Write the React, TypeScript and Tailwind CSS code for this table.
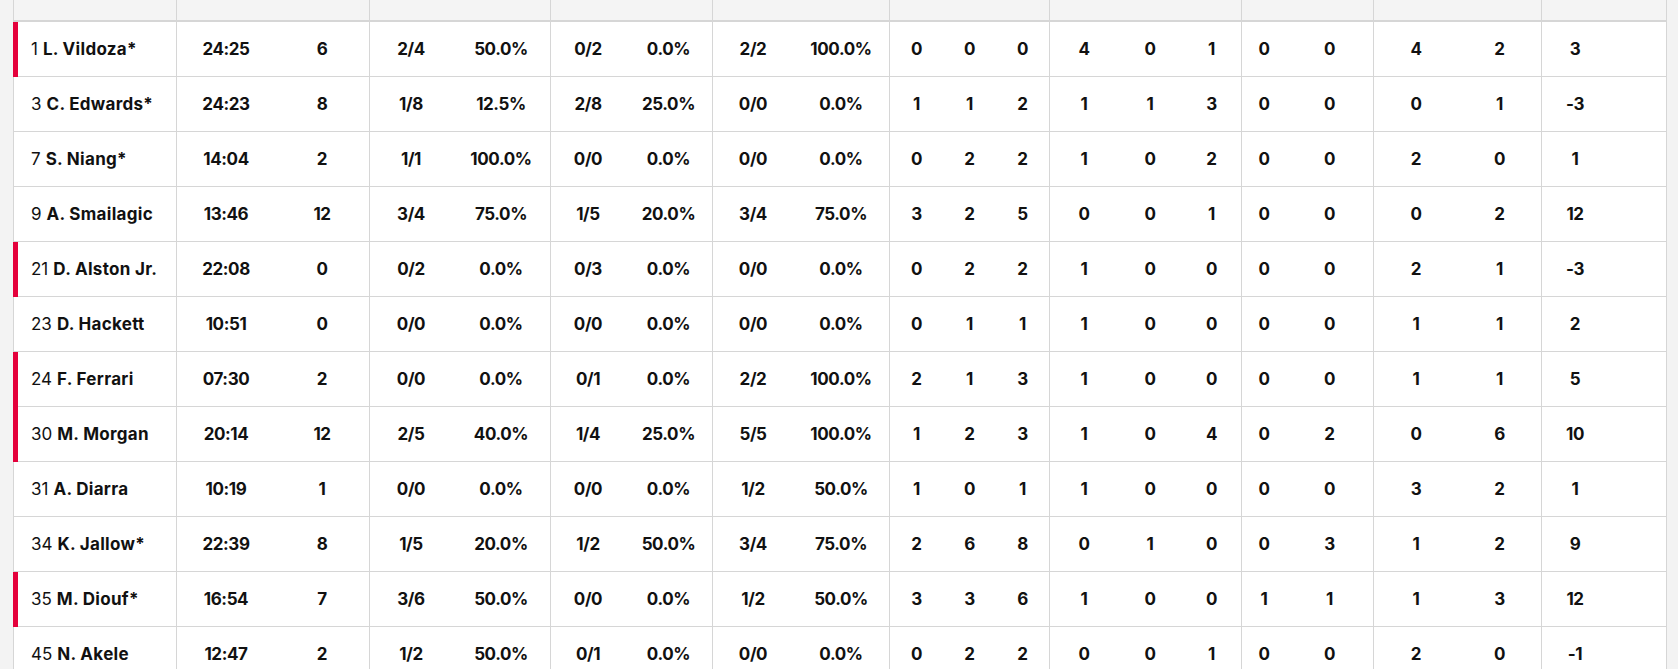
type Row = {
	num: string;
	name: string;
	flag?: boolean;
	stats: string[];
};

// widths per data column (incl. right border on group ends)
const cols = [
	{ w: "w-[98px]" },
	{ w: "w-[95px]", end: true },
	{ w: "w-[82px]" },
	{ w: "w-[99px]", end: true },
	{ w: "w-[74px]" },
	{ w: "w-[88px]", end: true },
	{ w: "w-[80px]" },
	{ w: "w-[97px]", end: true },
	{ w: "w-[53px]" },
	{ w: "w-[53px]" },
	{ w: "w-[54px]", end: true },
	{ w: "w-[68px]" },
	{ w: "w-[64px]" },
	{ w: "w-[60px]", end: true },
	{ w: "w-[44px]" },
	{ w: "w-[88px]", end: true },
	{ w: "w-[84px]" },
	{ w: "w-[84px]", end: true },
	{ w: "w-[66px]" },
	{ w: "w-[59px]", end: true },
];

const rows: Row[] = [
	{ num: "1", name: "L. Vildoza*", flag: true, stats: ["24:25", "6", "2/4", "50.0%", "0/2", "0.0%", "2/2", "100.0%", "0", "0", "0", "4", "0", "1", "0", "0", "4", "2", "3", ""] },
	{ num: "3", name: "C. Edwards*", stats: ["24:23", "8", "1/8", "12.5%", "2/8", "25.0%", "0/0", "0.0%", "1", "1", "2", "1", "1", "3", "0", "0", "0", "1", "-3", ""] },
	{ num: "7", name: "S. Niang*", stats: ["14:04", "2", "1/1", "100.0%", "0/0", "0.0%", "0/0", "0.0%", "0", "2", "2", "1", "0", "2", "0", "0", "2", "0", "1", ""] },
	{ num: "9", name: "A. Smailagic", stats: ["13:46", "12", "3/4", "75.0%", "1/5", "20.0%", "3/4", "75.0%", "3", "2", "5", "0", "0", "1", "0", "0", "0", "2", "12", ""] },
	{ num: "21", name: "D. Alston Jr.", flag: true, stats: ["22:08", "0", "0/2", "0.0%", "0/3", "0.0%", "0/0", "0.0%", "0", "2", "2", "1", "0", "0", "0", "0", "2", "1", "-3", ""] },
	{ num: "23", name: "D. Hackett", stats: ["10:51", "0", "0/0", "0.0%", "0/0", "0.0%", "0/0", "0.0%", "0", "1", "1", "1", "0", "0", "0", "0", "1", "1", "2", ""] },
	{ num: "24", name: "F. Ferrari", flag: true, stats: ["07:30", "2", "0/0", "0.0%", "0/1", "0.0%", "2/2", "100.0%", "2", "1", "3", "1", "0", "0", "0", "0", "1", "1", "5", ""] },
	{ num: "30", name: "M. Morgan", flag: true, stats: ["20:14", "12", "2/5", "40.0%", "1/4", "25.0%", "5/5", "100.0%", "1", "2", "3", "1", "0", "4", "0", "2", "0", "6", "10", ""] },
	{ num: "31", name: "A. Diarra", stats: ["10:19", "1", "0/0", "0.0%", "0/0", "0.0%", "1/2", "50.0%", "1", "0", "1", "1", "0", "0", "0", "0", "3", "2", "1", ""] },
	{ num: "34", name: "K. Jallow*", stats: ["22:39", "8", "1/5", "20.0%", "1/2", "50.0%", "3/4", "75.0%", "2", "6", "8", "0", "1", "0", "0", "3", "1", "2", "9", ""] },
	{ num: "35", name: "M. Diouf*", flag: true, stats: ["16:54", "7", "3/6", "50.0%", "0/0", "0.0%", "1/2", "50.0%", "3", "3", "6", "1", "0", "0", "1", "1", "1", "3", "12", ""] },
	{ num: "45", name: "N. Akele", stats: ["12:47", "2", "1/2", "50.0%", "0/1", "0.0%", "0/0", "0.0%", "0", "2", "2", "0", "0", "1", "0", "0", "2", "0", "-1", ""] },
];

function StatRow({ row }: { row: Row }) {
	return (
		<div className="flex h-[55px]">
			{row.flag ? (
				<div className="w-[5px] shrink-0 bg-[#e4003b]"></div>
			) : (
				<div className="w-[5px] shrink-0 border-l border-b border-[#d6d6d6]"></div>
			)}
			<div className="flex w-[159px] shrink-0 items-center border-b border-r border-[#d6d6d6] pl-[13px] pt-[2px] whitespace-nowrap">
				<span className="font-normal">{row.num}</span>
				<span className="ml-[5px] font-bold tracking-[0.3px]">{row.name}</span>
			</div>
			{row.stats.map((s, i) => (
				<div
					key={i}
					className={`flex shrink-0 items-center justify-center border-b border-[#d6d6d6] pt-[2px] font-bold tracking-[-0.4px] ${cols[i].w} ${
						cols[i].end ? "border-r" : ""
					}`}
				>
					{s}
				</div>
			))}
		</div>
	);
}

export default function App() {
	return (
		<div className="h-[669px] overflow-hidden bg-[#f3f3f3] pl-[13px] pr-[11px] font-['Inter',sans-serif] text-[17px] text-[#111]">
			<div className="w-[1654px] bg-white">
				<div className="flex h-[22px] border-b-2 border-[#d6d6d6] bg-[#f4f4f4]">
					<div className="w-[164px] shrink-0 border-l border-r border-[#d6d6d6]"></div>
					{cols.map((c, i) => (
						<div
							key={i}
							className={`shrink-0 border-[#d6d6d6] ${c.w} ${c.end ? "border-r" : ""}`}
						></div>
					))}
				</div>
				{rows.map((r, i) => (
					<StatRow key={i} row={r} />
				))}
			</div>
		</div>
	);
}
